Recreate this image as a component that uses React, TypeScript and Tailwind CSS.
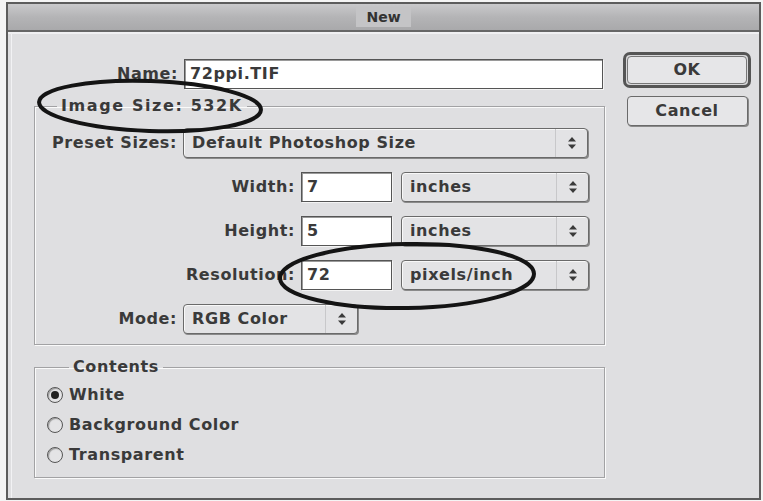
import React from 'react';

const FONT = { fontFamily: '"DejaVu Sans", "Liberation Sans", sans-serif' };

// Up/down arrows on the right end of a popup menu
const Arrows: React.FC = () => (
  <svg width="10" height="14" viewBox="0 0 10 14" className="text-[#3a3a3a]">
    <path d="M5 1 L9 5.5 H1 Z" fill="currentColor" />
    <path d="M5 13 L9 8.5 H1 Z" fill="currentColor" />
  </svg>
);

const Popup: React.FC<{ label: string; width: string }> = ({ label, width }) => (
  <div
    className={`${width} h-[30px] flex items-stretch rounded-[4px] border border-[#6a6a6a] bg-[#e3e3e5] shadow-[1px_1px_0_#8a8a8a,inset_1px_1px_0_#f8f8f8]`}
  >
    <div className="flex-1 flex items-center pl-[8px] text-[16px] tracking-[0.6px] font-bold text-[#3a3a3a]">{label}</div>
    <div className="w-[32px] flex items-center justify-center border-l border-[#c8c8ca]">
      <Arrows />
    </div>
  </div>
);

const TextBox: React.FC<{ value: string; width: string }> = ({ value, width }) => (
  <div
    className={`${width} h-[30px] flex items-center pl-[5px] bg-white border border-[#555] shadow-[1px_1px_0_#f4f4f4,inset_1px_1px_0_#9a9a9a] text-[16px] tracking-[0.6px] font-bold text-[#3a3a3a]`}
  >
    {value}
  </div>
);

const Label: React.FC<{ text: string; width: string }> = ({ text, width }) => (
  <div className={`${width} text-right text-[16px] tracking-[0.6px] font-bold text-[#3a3a3a] pr-[6px] whitespace-nowrap`}>{text}</div>
);

const Radio: React.FC<{ label: string; checked?: boolean }> = ({ label, checked }) => (
  <div className="h-[30px] flex items-center gap-[6px]">
    <div className="w-[16px] h-[16px] rounded-full border border-[#555] bg-[#e4e4e6] shadow-[inset_1px_1px_1px_#999] flex items-center justify-center">
      {checked && <div className="w-[8px] h-[8px] rounded-full bg-[#222]" />}
    </div>
    <span className="text-[16px] tracking-[0.6px] font-bold text-[#3a3a3a]">{label}</span>
  </div>
);

const App: React.FC = () => {
  return (
    <div className="w-[763px] h-[501px] bg-[#f4f4f4] pt-[2px] pl-[6px] pr-[2px] relative overflow-hidden" style={FONT}>
      <div className="h-[498px] border-2 border-[#5c5c5c] bg-[#dfdfe1] flex flex-col">
        {/* title bar */}
        <div className="h-[28px] bg-gradient-to-b from-[#c9c9cb] via-[#b4b4b6] to-[#a9a9ab] flex items-center justify-center border-b-2 border-[#666]">
          <div className="px-[10px] h-[20px] flex items-center bg-[#c4c4c6] text-[14px] font-bold text-[#333]">New</div>
        </div>
        <div className="h-[2px] bg-[#f0f0f2]" />

        <div className="flex-1 flex pt-[26px] pl-[22px] border-l border-[#f2f2f4] ml-[3px]">
          {/* form */}
          <div className="w-[571px] flex flex-col">
            <div className="flex items-center h-[28px]">
              <Label text="Name:" width="w-[150px]" />
              <TextBox value="72ppi.TIF" width="w-[419px]" />
            </div>

            <fieldset className="mt-[9px] border border-[#a2a2a4] shadow-[1px_1px_0_#fafafa,inset_1px_1px_0_#fafafa] pb-[10px]">
              <legend className="ml-[22px] px-[4px] text-[16px] tracking-[1.6px] font-bold text-[#3a3a3a] leading-[18px]">Image Size: 532K</legend>
              <div className="flex flex-col gap-[14px] pt-[13px]">
                <div className="flex items-center">
                  <Label text="Preset Sizes:" width="w-[148px]" />
                  <Popup label="Default Photoshop Size" width="w-[405px]" />
                </div>
                <div className="flex items-center">
                  <Label text="Width:" width="w-[266px]" />
                  <TextBox value="7" width="w-[91px]" />
                  <div className="w-[9px]" />
                  <Popup label="inches" width="w-[188px]" />
                </div>
                <div className="flex items-center">
                  <Label text="Height:" width="w-[266px]" />
                  <TextBox value="5" width="w-[91px]" />
                  <div className="w-[9px]" />
                  <Popup label="inches" width="w-[188px]" />
                </div>
                <div className="flex items-center">
                  <Label text="Resolution:" width="w-[266px]" />
                  <TextBox value="72" width="w-[91px]" />
                  <div className="w-[9px]" />
                  <Popup label="pixels/inch" width="w-[188px]" />
                </div>
                <div className="flex items-center">
                  <Label text="Mode:" width="w-[148px]" />
                  <Popup label="RGB Color" width="w-[175px]" />
                </div>
              </div>
            </fieldset>

            <fieldset className="mt-[13px] h-[120px] border border-[#a2a2a4] shadow-[1px_1px_0_#fafafa,inset_1px_1px_0_#fafafa] pl-[12px]">
              <legend className="ml-[22px] px-[4px] text-[16px] tracking-[0.6px] font-bold text-[#3a3a3a] leading-[18px]">Contents</legend>
              <div className="flex flex-col pt-[4px]">
                <Radio label="White" checked />
                <Radio label="Background Color" />
                <Radio label="Transparent" />
              </div>
            </fieldset>
          </div>

          {/* buttons */}
          <div className="ml-[18px] flex flex-col items-center -mt-[8px]">
            <div className="w-[128px] h-[36px] rounded-[7px] border-[3px] border-[#555] p-[1px] bg-[#d8d8da]">
              <div className="h-full rounded-[4px] border border-[#777] bg-[#e6e6e8] flex items-center justify-center text-[16px] tracking-[0.6px] font-bold text-[#3a3a3a]">
                OK
              </div>
            </div>
            <div className="mt-[8px] w-[121px] h-[30px] rounded-[4px] border border-[#6a6a6a] bg-[#e6e6e8] shadow-[1px_1px_0_#8a8a8a] flex items-center justify-center text-[16px] tracking-[0.6px] font-bold text-[#3a3a3a]">
              Cancel
            </div>
          </div>
        </div>
      </div>

      {/* hand-drawn marks over the dialog */}
      <svg className="absolute left-0 top-0 pointer-events-none" width="763" height="501">
        <ellipse cx="150" cy="106" rx="111" ry="25" transform="rotate(2 150 106)" fill="none" stroke="#141414" strokeWidth="4" />
        <ellipse cx="407" cy="276" rx="127" ry="32" transform="rotate(-1 407 276)" fill="none" stroke="#141414" strokeWidth="4" />
      </svg>
    </div>
  );
};

export default App;
